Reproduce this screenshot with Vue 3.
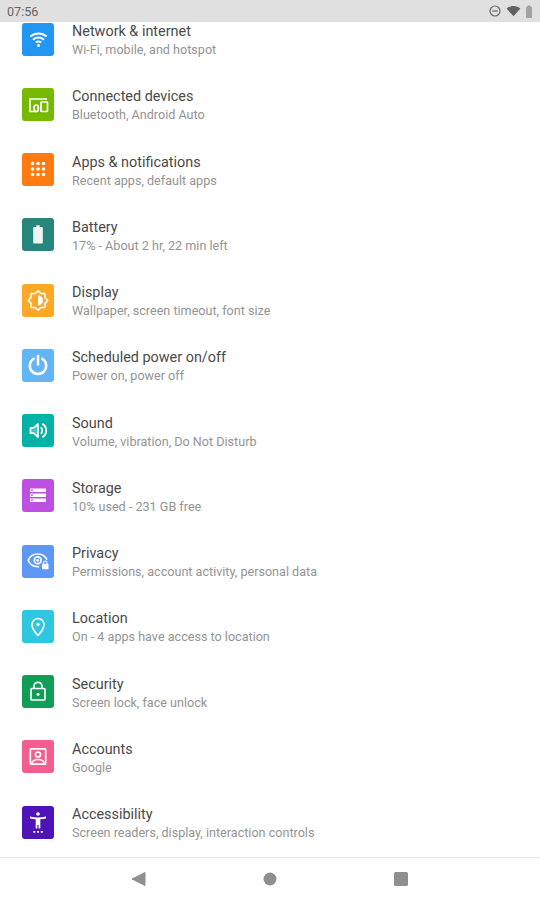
<script setup>
const rows = [
  { name: "wifi", color: "#2196f3", title: "Network & internet", sub: "Wi-Fi, mobile, and hotspot" },
  { name: "devices", color: "#76b900", title: "Connected devices", sub: "Bluetooth, Android Auto" },
  { name: "apps", color: "#ff7a0f", title: "Apps & notifications", sub: "Recent apps, default apps" },
  { name: "battery", color: "#26867c", title: "Battery", sub: "17% - About 2 hr, 22 min left" },
  { name: "display", color: "#ffa726", title: "Display", sub: "Wallpaper, screen timeout, font size" },
  { name: "power", color: "#64b5f6", title: "Scheduled power on/off", sub: "Power on, power off" },
  { name: "sound", color: "#00b3a6", title: "Sound", sub: "Volume, vibration, Do Not Disturb" },
  { name: "storage", color: "#bf4fe3", title: "Storage", sub: "10% used - 231 GB free" },
  { name: "privacy", color: "#5e97f6", title: "Privacy", sub: "Permissions, account activity, personal data" },
  { name: "location", color: "#2ec7e0", title: "Location", sub: "On - 4 apps have access to location" },
  { name: "security", color: "#0f9d58", title: "Security", sub: "Screen lock, face unlock" },
  { name: "accounts", color: "#f45e8f", title: "Accounts", sub: "Google" },
  { name: "accessibility", color: "#4f12b8", title: "Accessibility", sub: "Screen readers, display, interaction controls" },
];
</script>

<template>
  <div class="screen">
    <header class="status">
      <span class="time">07:56</span>
      <div class="status-icons">
        <svg width="14" height="14" viewBox="0 0 14 14">
          <circle cx="7" cy="7" r="5" fill="none" stroke="#6a6a6a" stroke-width="1.200" />
          <rect x="4.200" y="6.400" width="5.600" height="1.200" fill="#6a6a6a" />
        </svg>
        <svg width="15" height="14" viewBox="0 0 15 14">
          <path d="M7.500 12.200 .6 4.600C2.400 3 4.800 2 7.500 2s5.100 1 6.900 2.600z" fill="#616161" />
        </svg>
        <svg width="8" height="13" viewBox="0 0 8 13">
          <path d="M2.500 .5h3v1.200H7V13H1V1.700h1.500z" fill="#a3a3a3" />
        </svg>
      </div>
    </header>

    <main class="content">
      <ul class="list">
        <li v-for="row in rows" :key="row.name" class="row">
          <div class="tile" :style="{ background: row.color }">
            <svg class="glyph" viewBox="0 0 33 33" fill="none" stroke="#fff" stroke-width="1.700">
              <template v-if="row.name === 'wifi'">
                <path d="M8.300 13.600c4.700-4.300 11.700-4.300 16.400 0M11 16.700c3.200-2.800 7.800-2.800 11 0M13.700 19.600c1.700-1.400 3.900-1.400 5.600 0" stroke-width="2" />
                <circle cx="16.500" cy="22.400" r="1.500" fill="#fff" stroke="none" />
              </template>
              <template v-else-if="row.name === 'devices'">
                <path d="M25 11H8v12.500h6.500" />
                <rect x="12.200" y="17" width="4" height="6.500" rx="2" fill="#76b900" />
                <rect x="19" y="14" width="6.500" height="9.500" rx=".6" />
              </template>
              <template v-else-if="row.name === 'apps'">
                <g fill="#fff" stroke="none">
                  <circle cx="10.500" cy="10.500" r="1.800" /><circle cx="16" cy="10.500" r="1.800" /><circle cx="21.500" cy="10.500" r="1.800" />
                  <circle cx="10.500" cy="16" r="1.800" /><circle cx="16" cy="16" r="1.800" /><circle cx="21.500" cy="16" r="1.800" />
                  <circle cx="10.500" cy="21.500" r="1.800" /><circle cx="16" cy="21.500" r="1.800" /><circle cx="21.500" cy="21.500" r="1.800" />
                </g>
              </template>
              <template v-else-if="row.name === 'battery'">
                <path d="M14.300 7.300h3.400v1.600h2.300c.5 0 .8.300.8.800v15c0 .5-.3.800-.8.800h-8c-.5 0-.8-.3-.8-.8v-15c0-.5.300-.8.800-.8h2.300z" fill="#f1f5f4" stroke="none" />
              </template>
              <template v-else-if="row.name === 'display'">
                <path d="M16 6.800 18.900 9.500 22.800 9.700 23 13.600 25.700 16.500 23 19.400 22.800 23.300 18.900 23.500 16 26.200 13.100 23.500 9.200 23.300 9 19.400 6.300 16.500 9 13.600 9.200 9.700 13.100 9.500z" stroke-linejoin="round" />
                <path d="M16 11.500a5 5 0 0 1 0 10z" fill="#fff" stroke="none" />
              </template>
              <template v-else-if="row.name === 'power'">
                <path d="M11.700 9.800a8.200 8.200 0 1 0 8.600 0" stroke-width="2.500" stroke-linecap="round" />
                <path d="M16 7v8.500" stroke-width="2.500" stroke-linecap="round" />
              </template>
              <template v-else-if="row.name === 'sound'">
                <path d="M8.500 13.800v5.400h3.200l4.300 3.800V10l-4.300 3.800z" fill="#fff" fill-opacity=".25" stroke-linejoin="round" />
                <path d="M18.700 13.300a4 4 0 0 1 0 6.400M20.300 9.900a7.500 7.500 0 0 1 0 13.200" stroke-width="1.800" />
              </template>
              <template v-else-if="row.name === 'storage'">
                <path d="M8 9.500h16v3.400H8zM8 14.500h16v3.400H8zM8 19.500h16v3.400H8z" fill="#fff" stroke="none" />
                <g fill="#bf4fe3" stroke="none">
                  <circle cx="10" cy="11.200" r=".9" /><circle cx="10" cy="16.200" r=".9" /><circle cx="10" cy="21.200" r=".9" />
                </g>
              </template>
              <template v-else-if="row.name === 'privacy'">
                <path d="M25 14.600C23.200 11 19.700 9 15.700 9c-4.300 0-8 2.500-9.500 6.300 1.500 3.800 5.200 6.300 9.500 6.300h1.500" />
                <circle cx="15.700" cy="15.300" r="3.400" />
                <circle cx="15.700" cy="15.300" r="1.400" fill="#fff" stroke="none" />
                <rect x="20" y="18.800" width="6.500" height="5.400" rx=".6" fill="#fff" stroke="none" />
                <path d="M21.500 19v-1.300a1.750 1.750 0 0 1 3.500 0V19" stroke-width="1.100" />
              </template>
              <template v-else-if="row.name === 'location'">
                <path d="M16 25.500s-6-6.300-6-11a6 6 0 0 1 12 0c0 4.700-6 11-6 11z" stroke-linejoin="round" />
                <circle cx="16" cy="14.500" r="1.700" fill="#fff" stroke="none" />
              </template>
              <template v-else-if="row.name === 'security'">
                <rect x="9" y="13.500" width="14" height="11.500" rx="1" />
                <path d="M12 13.500v-2.200a4 4 0 0 1 8 0v2.200" />
                <circle cx="16" cy="19.200" r="1.500" fill="#fff" stroke="none" />
              </template>
              <template v-else-if="row.name === 'accounts'">
                <rect x="8.300" y="8.800" width="15.400" height="15.400" rx="1" />
                <circle cx="16" cy="14.500" r="2.500" />
                <path d="M9.500 23.500c1-2.800 3.500-4 6.500-4s5.500 1.200 6.500 4" />
              </template>
              <template v-else>
                <circle cx="16" cy="8" r="1.800" fill="#fff" stroke="none" />
                <path d="M8 10.500c2.500.6 5.300 1 8 1s5.500-.4 8-1v1.900c-1.900.5-3.900.8-5.700.9v5.700h-4.600v-5.700c-1.800-.1-3.800-.4-5.700-.9z" fill="#fff" stroke="none" />
                <path d="M13.700 19h1.700v3.500h-1.700zM16.600 19h1.700v3.500h-1.700z" fill="#fff" stroke="none" />
                <path d="M11.300 25h1.900v1.700h-1.900zM15.050 25h1.900v1.700h-1.900zM18.800 25h1.900v1.700h-1.900z" fill="#fff" stroke="none" />
              </template>
            </svg>
          </div>
          <div class="text">
            <div class="title">{{ row.title }}</div>
            <div class="sub">{{ row.sub }}</div>
          </div>
        </li>
      </ul>
    </main>

    <footer class="nav">
      <svg width="16" height="16" viewBox="0 0 16 16"><path d="M14 1.500v13L1 8z" fill="#8f8f8f" stroke="#8f8f8f" stroke-linejoin="round" /></svg>
      <svg width="16" height="16" viewBox="0 0 16 16"><circle cx="8" cy="8" r="6.500" fill="#8f8f8f" /></svg>
      <svg width="16" height="16" viewBox="0 0 16 16"><rect x="1" y="1" width="14" height="14" rx="1.500" fill="#8f8f8f" /></svg>
    </footer>
  </div>
</template>

<style>
html,
body {
  margin: 0;
  background: #fff;
}
</style>

<style scoped>
.screen {
  display: flex;
  flex-direction: column;
  width: 540px;
  height: 900px;
  overflow: hidden;
  font-family: Roboto, "Liberation Sans", sans-serif;
}
.status {
  display: flex;
  flex: none;
  align-items: center;
  justify-content: space-between;
  height: 22px;
  padding: 0 7px;
  background: #e0e0e0;
  color: #666;
  font-size: 12.6px;
  box-sizing: border-box;
}
.status-icons {
  display: flex;
  align-items: center;
  gap: 4px;
}
.content {
  flex: 1;
  min-height: 0;
  overflow: hidden;
}
.list {
  margin: -15.4px 0 0;
  padding: 0;
  list-style: none;
}
.row {
  display: flex;
  align-items: center;
  gap: 17px;
  height: 65.25px;
  padding-left: 22px;
}
.tile {
  flex: none;
  width: 32px;
  height: 33px;
  border-radius: 3px;
}
.glyph {
  display: block;
  width: 33px;
  height: 33px;
}
.text {
  padding-left: 1px;
  padding-top: 3px;
}
.title {
  color: #4a4a4a;
  font-size: 14.4px;
  line-height: 18px;
}
.sub {
  color: #949494;
  font-size: 12.6px;
  line-height: 17px;
}
.nav {
  display: flex;
  flex: none;
  align-items: center;
  justify-content: space-between;
  height: 43px;
  padding: 0 131px;
  border-top: 1px solid #e6e6e6;
  box-sizing: border-box;
}
</style>
